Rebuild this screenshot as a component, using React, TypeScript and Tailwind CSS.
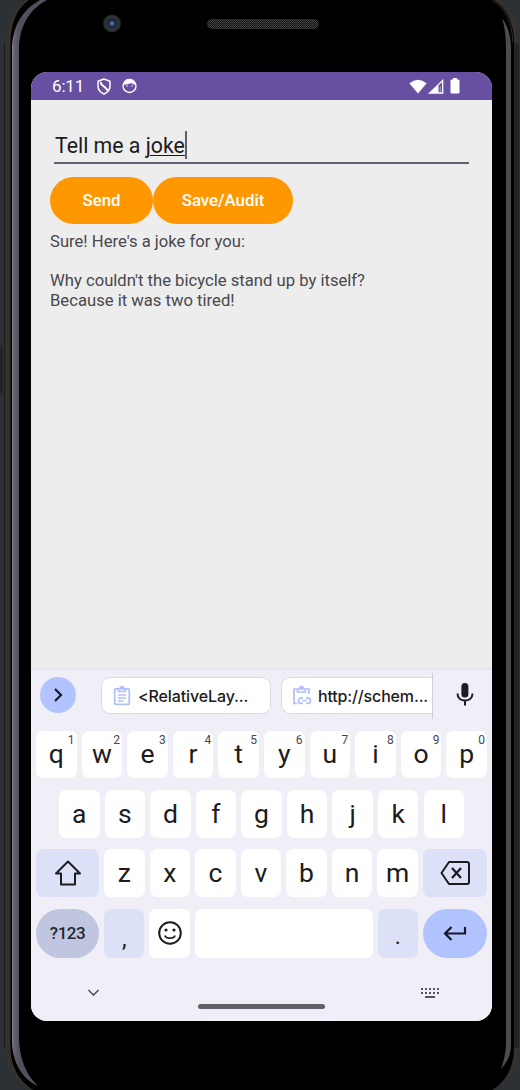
import React from "react";

type KeyProps = { label: string; hint?: string };

function Key({ label, hint }: KeyProps) {
  return (
    <div className="relative flex h-full w-[40.5px] shrink-0 items-center justify-center rounded-[7px] bg-white">
      <span className="text-[26.5px] leading-none text-[#1b1b20]">{label}</span>
      {hint && <span className="absolute top-[3px] right-[2px] text-[12px] leading-none text-[#45464f]">{hint}</span>}
    </div>
  );
}

function PhoneBody() {
  return (
    <svg className="absolute inset-0" width="520" height="1090" viewBox="0 0 520 1090" fill="none">
      <defs>
        <linearGradient id="edge" x1="12" x2="19" y1="0" y2="0" gradientUnits="userSpaceOnUse">
          <stop offset="0" stopColor="#85868b" />
          <stop offset="0.3" stopColor="#62636d" />
          <stop offset="1" stopColor="#50515c" />
        </linearGradient>
        <pattern id="mesh" width="2" height="2" patternUnits="userSpaceOnUse">
          <rect width="2" height="2" fill="#171717" />
          <rect width="1" height="1" fill="#444" />
          <rect x="1" y="1" width="1" height="1" fill="#3a3a3a" />
        </pattern>
        <radialGradient id="lens">
          <stop offset="0" stopColor="#7890b5" />
          <stop offset="0.25" stopColor="#263d66" />
          <stop offset="0.5" stopColor="#18202e" />
          <stop offset="0.65" stopColor="#35373d" />
          <stop offset="1" stopColor="#22242a" />
        </radialGradient>
      </defs>
      <rect width="520" height="1090" fill="#2c3135" />
      <path d="M24 0C12 9 5 24 5 43V1048C5 1066 15 1081 29 1090H495C510 1081 519 1066 519 1048V43C519 24 512 9 500 0Z" fill="#34312f" />
      <path d="M1.500 345V393" stroke="#1c2023" strokeWidth="2" />
      <path d="M4.500 43V1048" stroke="#1b1b1b" />
      <path d="M29 0C16 9 10.500 25 10.500 43V1048C10.500 1066 19 1081 33 1090H492C507 1081 514 1066 514 1048V43C514 25 508 9 494 0Z" fill="#000" />
      <path d="M516.500 43V1048" stroke="#252525" strokeWidth="5" />
      <path d="M40 0C22 10 12 27 12 50V1040C12 1062 22 1079 38 1086C26 1075 19 1058 19 1036V50C19 28 28 10 47 0Z" fill="url(#edge)" />
      <path d="M502 18C508 26 511 36 511 50V1045C511 1055 507 1063 501 1069C504 1060 506 1052 506 1042V50C506 37 505 28 502 18Z" fill="#4b4b50" />
      <path d="M492 0C506 9 512.500 22 512.500 42" stroke="#303033" />
      <circle cx="112" cy="23.500" r="9" fill="url(#lens)" />
      <rect x="207" y="19" width="112" height="10" rx="5" fill="url(#mesh)" />
    </svg>
  );
}

function StatusBar() {
  return (
    <div className="flex h-7 shrink-0 items-center bg-[#6750a1] pr-[31px] pl-[21px] text-white">
      <span className="w-[45px] pt-[1px] text-[17px] leading-none tracking-[-0.15px]">6:11</span>
      <svg width="14" height="17" viewBox="0 0 14 17" fill="none" stroke="white" strokeWidth="1.500">
        <path d="M7 1L1 3.300V8C1 12 3.500 14.500 7 16C10.500 14.500 13 12 13 8V3.300Z" />
        <path d="M3.500 4.200C4 8 8 7.500 10.500 12.500" strokeWidth="2" />
      </svg>
      <svg className="ml-[11px]" width="15" height="16" viewBox="0 0 15 16" fill="none">
        <circle cx="7.500" cy="8" r="6.500" stroke="white" strokeWidth="1.400" />
        <path d="M1.500 6.800C2 3 4 1.200 7.500 1.200S13 3 13.500 6.800C11.500 6.500 10.500 5.200 9 5.200C7.500 5.200 5 6.600 1.500 6.800Z" fill="white" />
        <path d="M5 7V8.500M10 7V8.500" stroke="white" strokeWidth="1" />
      </svg>
      <div className="ml-auto flex items-center">
        <svg width="18" height="15" viewBox="0 0 18 15"><path d="M9 14.500L0.300 4.200Q9 -2.800 17.700 4.200Z" fill="white" /></svg>
        <svg className="ml-[1px]" width="16" height="15" viewBox="0 0 16 15"><path d="M0 14.700L15.300 0V14.700Z" fill="white" /><path d="M10.500 6.500L14 3V13.200H10.500Z" fill="#6750a1" /><path d="M11.700 7.500H12.700V13.500H11.700Z" fill="white" opacity=".5" /></svg>
        <svg className="mr-[1px] ml-[6px]" width="10" height="16" viewBox="0 0 10 16"><path d="M3 0H7V1.500H8.500Q9.500 1.500 9.500 2.500V14.500Q9.500 15.500 8.500 15.500H1.500Q.5 15.500 .5 14.500V2.500Q.5 1.500 1.500 1.500H3Z" fill="white" /></svg>
      </div>
    </div>
  );
}

function Clipboard({ linked }: { linked?: boolean }) {
  return (
    <svg className="shrink-0" width="20" height="20" viewBox="0 0 20 20" fill="none" stroke="#aebffa" strokeWidth="1.700">
      {linked ? (
        <>
          <path d="M17 8V3H2V17.500H5.500" />
          <path d="M5.500 3V6H13.500V3" />
          <path d="M9.500 0.500A1.600 1.600 0 0 1 11.200 2.500H7.800A1.600 1.600 0 0 1 9.500 .5Z" fill="#aebffa" />
          <path d="M11 11.800H9.200A2.700 2.700 0 0 0 9.200 17.300H11M14 11.800H15.800A2.700 2.700 0 0 1 15.800 17.300H14M10.300 14.500H14.700" />
        </>
      ) : (
        <>
          <rect x="2.700" y="2.800" width="14.600" height="15.500" rx="1" />
          <path d="M6.500 3.500V5.500H13.500V3.500M6 9H14M6 12H14M6 15H11.500" />
          <path d="M10 .7A1.500 1.500 0 0 1 11.700 2.500H8.300A1.500 1.500 0 0 1 10 .7Z" fill="#aebffa" />
        </>
      )}
    </svg>
  );
}

function SuggestionBar() {
  return (
    <div className="flex h-[61px] shrink-0 pt-[7px] pl-[9px]">
      <button className="flex size-9 items-center justify-center rounded-full bg-[#b2c4ff]">
        <svg width="12" height="16" viewBox="0 0 12 16" fill="none" stroke="#16192b" strokeWidth="2.200"><path d="M3 2L9 8L3 14" /></svg>
      </button>
      <div className="ml-[25px] flex h-[37px] w-[170px] items-center rounded-[9px] border border-[#dcdbe4] bg-white pl-[10px]">
        <Clipboard />
        <span className="ml-[6px] text-[16px] leading-none font-medium tracking-[-0.12px] whitespace-nowrap text-[#1b1b20]">&lt;RelativeLay...</span>
      </div>
      <div className="ml-[10px] -mt-1 flex h-[46px] w-[152px] items-start border-r border-[#cfced6] pt-1">
        <div className="flex h-[37px] w-full items-center rounded-l-[9px] border border-r-0 border-[#dcdbe4] bg-white pl-[10px]">
          <Clipboard linked />
          <span className="ml-[6px] text-[16px] leading-none font-medium tracking-[-0.15px] whitespace-nowrap text-[#1b1b20]">http://schem...</span>
        </div>
      </div>
      <svg className="mt-[6px] ml-[23px]" width="18" height="24" viewBox="0 0 18 24" fill="none">
        <rect x="5.400" y="0" width="7" height="14.500" rx="3.500" fill="#1b1b20" />
        <path d="M1.500 10.500C1.500 15 5 17.500 9 17.500S16.500 15 16.500 10.500M9 17V22.500" stroke="#1b1b20" strokeWidth="2" />
      </svg>
    </div>
  );
}

const topRow = "qwertyuiop".split("");
const hints = "1234567890".split("");

function Keyboard() {
  return (
    <div className="flex h-[353px] flex-col border-t-2 border-[#e6e6ea] bg-[#f0eff7] font-[Inter,Roboto,sans-serif]">
      <SuggestionBar />
      <div className="flex h-[47px] shrink-0 justify-between pr-[5px] pl-[5px] font-[Roboto,sans-serif]">
        {topRow.map((k, i) => <Key key={k} label={k} hint={hints[i]} />)}
      </div>
      <div className="mt-3 flex h-12 shrink-0 justify-between pr-7 pl-7 font-[Roboto,sans-serif]">
        {"asdfghjkl".split("").map((k) => <Key key={k} label={k} />)}
      </div>
      <div className="mt-[11px] flex h-12 shrink-0 justify-between px-[5px] font-[Roboto,sans-serif]">
        <div className="flex w-[63px] items-center justify-center rounded-[7px] bg-[#dce1f8]">
          <svg width="28" height="26" viewBox="0 0 28 26" fill="none" stroke="#1b1b20" strokeWidth="2" strokeLinejoin="round"><path d="M14 1.500L26 13.500H21V24.500H7V13.500H2Z" /></svg>
        </div>
        {"zxcvbnm".split("").map((k) => <Key key={k} label={k} />)}
        <div className="flex w-[64px] items-center justify-center rounded-[7px] bg-[#dce1f8]">
          <svg width="30" height="24" viewBox="0 0 30 24" fill="none" stroke="#1b1b20" strokeWidth="2"><path d="M9 1H27Q29 1 29 3V21Q29 23 27 23H9L1.500 12Z" strokeLinejoin="round" /><path d="M12 7L21 17M21 7L12 17" strokeWidth="2.300" /></svg>
        </div>
      </div>
      <div className="mt-[11.500px] flex h-[49.500px] shrink-0 justify-between px-[5px] font-[Roboto,sans-serif]">
        <div className="flex w-[63px] items-center justify-center rounded-full bg-[#c0c6df] text-[17px] font-medium tracking-[-0.5px] text-[#242631]">?123</div>
        <div className="flex w-[40.500px] items-end justify-center rounded-[7px] bg-[#dce1f8] pb-[7px] text-[23px] leading-none text-[#1b1b20]">,</div>
        <div className="flex w-[40.500px] items-center justify-center rounded-[7px] bg-white">
          <svg width="24" height="24" viewBox="0 0 24 24" fill="none" stroke="#1b1b20" strokeWidth="2"><circle cx="12" cy="12" r="10.800" /><path d="M7 14.500C8 18 16 18 17 14.500" strokeWidth="1.700" /><circle cx="8" cy="9" r="1.600" fill="#1b1b20" stroke="none" /><circle cx="16" cy="9" r="1.600" fill="#1b1b20" stroke="none" /></svg>
        </div>
        <div className="w-[178px] rounded-[7px] bg-white" />
        <div className="flex w-[40.500px] items-end justify-center rounded-[7px] bg-[#dce1f8] pb-[10px] text-[23px] leading-none text-[#1b1b20]">.</div>
        <div className="flex w-[64px] items-center justify-center rounded-full bg-[#b2c4ff]">
          <svg width="24" height="16" viewBox="0 0 24 16" fill="none" stroke="#16192b" strokeWidth="2.200"><path d="M22 2V8.500H2M8.500 2L2 8.500L8.500 15" /></svg>
        </div>
      </div>
      <div className="flex flex-1 pt-[28px] pl-[56px]">
        <svg className="mt-[2px]" width="13" height="10" viewBox="0 0 13 10" fill="none" stroke="#55565b" strokeWidth="1.600"><path d="M1.500 2L6.500 7L11.500 2" /></svg>
        <div className="mt-[18px] ml-[98px] h-[5px] w-[127px] rounded-full bg-[#626165]" />
        <svg className="mt-[1px] ml-[95px]" width="19" height="11" viewBox="0 0 19 11" fill="none" stroke="#55565b" strokeWidth="2"><path d="M1 2H19M1 6H19" strokeDasharray="2 2" /><path d="M5 10H15" /></svg>
      </div>
    </div>
  );
}

export default function App() {
  return (
    <div className="relative h-[1090px] w-[520px] overflow-hidden bg-black pt-[72px] pl-[31px] font-[Roboto,sans-serif]">
      <PhoneBody />
      <main className="relative flex h-[949px] w-[461px] flex-col overflow-hidden rounded-[16px] bg-[#ededed]">
        <StatusBar />
        <section className="flex flex-1 flex-col px-[19px] pt-[30px]">
          <div className="mx-1 flex h-[34px] items-start border-b-2 border-[#625f70] pl-[1px] text-[21.3px] leading-[32px] text-[#1b1b20]">
            <span className="whitespace-pre">Tell me a </span>
            <span className="underline decoration-1 underline-offset-2">joke</span>
            <span className="mt-[1px] h-[28px] w-[2.500px] bg-[#625f70]" />
          </div>
          <div className="mt-[13px] flex h-[47px] text-[16.8px] font-medium text-white">
            <button className="w-[103px] rounded-full bg-[#ff9800]">Send</button>
            <button className="w-[140px] rounded-full bg-[#ff9800]">Save/Audit</button>
          </div>
          <p className="mt-[8px] text-[16.650px] leading-[19.600px] whitespace-pre-line text-[#49484d]">
            {"Sure! Here's a joke for you:\n\nWhy couldn't the bicycle stand up by itself?\nBecause it was two tired!"}
          </p>
        </section>
        <Keyboard />
      </main>
    </div>
  );
}
